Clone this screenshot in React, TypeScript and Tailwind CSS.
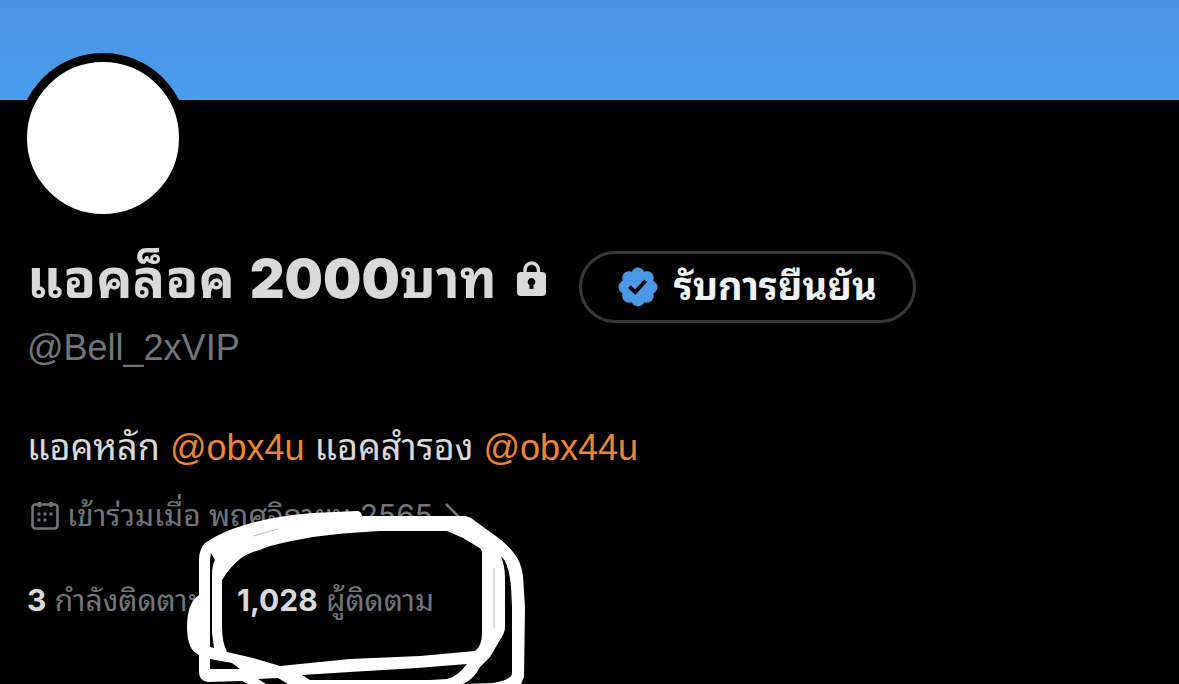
function LockIcon() {
  return (
    <svg viewBox="0 0 30 36" className="h-9 w-[30px] shrink-0" role="img" aria-label="บัญชีที่ป้องกัน">
      <path d="M8 12V9a6.7 7 0 0 1 13.4 0v3" fill="none" stroke="#d9d9d9" strokeWidth="3.4" />
      <path fillRule="evenodd" fill="#d9d9d9" d="M4 11h21a4 4 0 0 1 4 4v16a4 4 0 0 1-4 4H4a4 4 0 0 1-4-4V15a4 4 0 0 1 4-4Zm10.5 6a3.8 3.8 0 0 0-2 7v4h4v-4a3.8 3.8 0 0 0-2-7Z" />
    </svg>
  );
}

function VerifiedIcon() {
  return (
    <svg viewBox="1.5 1.5 21 21" className="size-10 shrink-0" fill="#4a99e9" aria-hidden="true">
      <path d="M22.25 12c0-1.43-.88-2.67-2.19-3.34.46-1.39.2-2.9-.81-3.91s-2.52-1.27-3.91-.81c-.66-1.31-1.91-2.19-3.34-2.19s-2.67.88-3.33 2.19c-1.4-.46-2.91-.2-3.92.81s-1.26 2.52-.8 3.91c-1.31.67-2.2 1.91-2.2 3.34s.89 2.67 2.2 3.34c-.46 1.39-.21 2.9.8 3.91s2.52 1.26 3.91.81c.67 1.31 1.91 2.19 3.34 2.19s2.68-.88 3.34-2.19c1.39.45 2.9.2 3.91-.81s1.27-2.52.81-3.91c1.31-.67 2.19-1.91 2.19-3.34zm-11.71 4.2L6.8 12.46l1.41-1.42 2.26 2.26 4.8-5.23 1.47 1.36-6.2 6.77z" />
    </svg>
  );
}

function CalendarIcon() {
  return (
    <svg viewBox="0 0 28 28" className="size-7 shrink-0" aria-hidden="true">
      <rect x="1.5" y="2.5" width="25" height="24" rx="3" fill="none" stroke="#71767b" strokeWidth="2.6" />
      <path d="M8.5 0v5M20 0v5" stroke="#71767b" strokeWidth="3.6" />
      <path d="M12.5 10.5h3v3h-3zM18.5 10.5h3v3h-3zM6.5 10.5h3v3h-3zM6.5 16.5h3v3h-3zM12.5 16.5h3v3h-3z" fill="#71767b" />
    </svg>
  );
}

function Scribble() {
  return (
    <svg viewBox="180 500 350 184" className="pointer-events-none absolute left-[180px] top-[500px] h-[184px] w-[350px]" aria-hidden="true">
      <path
        fill="#fff"
        fillRule="evenodd"
        d="M199 560Q199 549 205 543Q222 531 248 524Q275 516 313 513L357 511Q361 511 362 516H465Q471 517 475 521L493 534Q506 543 513 552Q521 561 523 576L525 607L524 677L521 684H248L242 681L208 682Q199 681 199 672V655Q187 650 187 627Q187 603 199 595Z
        M222 580Q230 567 240 559Q248 553 260 550Q268 545 313 537Q340 533 380 531H447L463 538L478 547Q482 549 482 553V633Q482 646 475 651L420 656L350 659L280 666L253 658L227 652Q222 642 222 627Z
        M211 553L215 560Q212 565 212 575V633L214 648L210 647V560Z
        M210 659L232 663L240 669H210Z
        M501 556Q509 563 511 587L512 607V673Q512 680 493 683L463 684Q474 679 480 667L490 657L500 640Q505 633 505 627V577Q505 567 501 556Z
        M302 675L350 672L417 668L467 664Q457 677 447 679L430 680H310Z
        M258 679L278 678L288 684H266Z"
      />
      <path d="M253 536L278 529M494 568V628" stroke="#777" strokeWidth=".5" />
    </svg>
  );
}

export default function App() {
  return (
    <main lang="th" className="relative min-h-screen overflow-hidden bg-black font-['Liberation_Sans','Noto_Sans_Thai_Looped','Noto_Looped_Thai','Loma','Garuda','Waree','Noto_Sans_Thai','Noto_Sans',sans-serif] text-[#d9d9d9]">
      <header className="h-[100px] bg-linear-to-b from-[#4994e2] to-[#4a9cec]" />
      <div className="relative -mt-[47px] ml-[18px] size-[170px] rounded-full border-9 border-black bg-white" />

      <section className="px-[27px] pt-7">
        <div className="flex h-[72px] items-start">
          <h1 className="text-[54px] leading-[56px] font-bold whitespace-nowrap">
            แอคล็อค <span className="font-['Inter',sans-serif] font-black">2000</span>บาท
          </h1>
          <span className="ml-5 flex h-14 items-center"><LockIcon /></span>
          <button type="button" className="ml-8 flex h-[72px] items-center gap-4 rounded-full border-3 border-[#38383a] px-9 text-[38px] font-bold whitespace-nowrap text-[#eff3f4]">
            <VerifiedIcon />
            รับการยืนยัน
          </button>
        </div>
        <p className="text-[36px] leading-[50px] text-[#71767b]">@Bell_2xVIP</p>
        <p className="mt-[50px] text-[36px] leading-[50px] whitespace-nowrap">
          แอคหลัก <a href="#obx4u" className="text-[#ef8433]">@obx4u</a> แอคสำรอง <a href="#obx44u" className="text-[#ef8433]">@obx44u</a>
        </p>
        <p className="mt-[22px] flex items-center gap-2 pl-1 text-[30px] leading-10 whitespace-nowrap text-[#71767b]">
          <CalendarIcon />
          <span>เข้าร่วมเมื่อ พฤศจิกายน <span className="font-['Inter',sans-serif]">2565</span></span>
          <svg viewBox="0 0 14 26" className="ml-1 h-[26px] w-[14px]" fill="none" stroke="#71767b" strokeWidth="2.5" aria-hidden="true">
            <path d="M1 1l12 12L1 25" />
          </svg>
        </p>
        <p className="mt-11 flex text-[30px] leading-10 whitespace-nowrap text-[#71767b]">
          <a href="#following" className="w-[210px]"><b className="font-['Inter',sans-serif] text-[#d9d9d9]">3</b> กำลังติดตาม</a>
          <a href="#followers"><b className="font-['Inter',sans-serif] text-[#d9d9d9]">1,028</b> ผู้ติดตาม</a>
        </p>
      </section>
      <Scribble />
    </main>
  );
}
